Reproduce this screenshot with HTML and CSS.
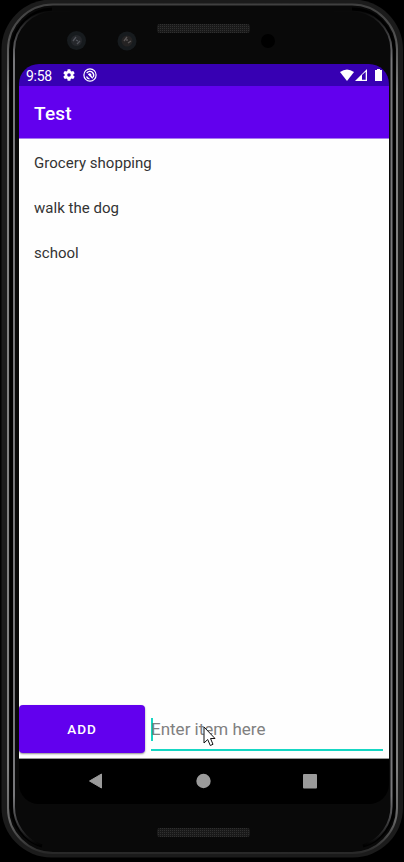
FILE: index.html
```html
<!DOCTYPE html>
<html lang="en">
<head>
<meta charset="utf-8">
<title>Test</title>
<link rel="stylesheet" href="styles.css">
</head>
<body>
<div class="device">
  <svg class="bezel" viewBox="0 0 404 862" aria-hidden="true">
    <defs>
      <linearGradient id="rim" x1="0" y1="0" x2="0" y2="1">
        <stop offset="0" stop-color="#404040"/><stop offset=".03" stop-color="#4c4c4c"/><stop offset=".1" stop-color="#808080"/>
        <stop offset=".9" stop-color="#808080"/><stop offset=".96" stop-color="#666"/><stop offset="1" stop-color="#282828"/>
      </linearGradient>
      <linearGradient id="edge" x1="0" y1="0" x2="0" y2="1">
        <stop offset="0" stop-color="#77777a" stop-opacity="0"/><stop offset=".06" stop-color="#77777a"/>
        <stop offset=".94" stop-color="#77777a"/><stop offset="1" stop-color="#77777a" stop-opacity="0"/>
      </linearGradient>
      <pattern id="mesh" width="2" height="2" patternUnits="userSpaceOnUse">
        <rect width="2" height="2" fill="#191919"/><rect width="1" height="1" fill="#303030"/>
      </pattern>
    </defs>
    <rect x="1.500" y="-.5" width="401.500" height="858" rx="50" fill="#1b1b1b"/>
    <rect x="8" y="4.500" width="389" height="848.500" rx="45" fill="#090909" stroke="url(#rim)" stroke-width="2"/>
    <path d="M52 9A42 42 0 0 0 11.500 52V805A42 42 0 0 0 42 846" fill="none" stroke="#000" stroke-width="3"/>
    <path d="M352 9A42 42 0 0 1 394 52V805A42 42 0 0 1 363 846" fill="none" stroke="#000" stroke-width="3"/>
    <path d="M70 10.500H54A40 40 0 0 0 14 50V805A42 42 0 0 0 42 846" fill="none" stroke="url(#edge)" stroke-width="2"/>
    <path d="M334 10.500H351A40 40 0 0 1 391.500 50V805A42 42 0 0 1 363 846" fill="none" stroke="url(#edge)" stroke-width="2"/>
    <rect x="157" y="24" width="93" height="9" rx="3" fill="url(#mesh)"/>
    <rect x="157" y="828" width="93" height="9" rx="3" fill="url(#mesh)"/>
    <g>
      <circle cx="76.500" cy="40.500" r="9.500" fill="#171b1e"/><circle cx="76.500" cy="40.500" r="5.500" fill="#25272b"/>
      <path d="M73 41l3-4M77 44l3-3M76 40l2 1" stroke="#51545a" stroke-width="1.300"/>
      <circle cx="127" cy="41" r="9.500" fill="#171b1e"/><circle cx="127" cy="41" r="5.500" fill="#252323"/>
      <path d="M124 41l3-4M128 43l3-2M127 39v2" stroke="#5a5656" stroke-width="1.300"/>
      <circle cx="268" cy="41" r="7" fill="#000"/>
    </g>
  </svg>
  <main class="screen">
    <div class="status">
      <span class="time">9:58</span>
      <svg class="gear" viewBox="2 2 20 20"><path fill="#fff" d="M19.140 12.940c.04-.3.060-.61.060-.94s-.02-.64-.07-.94l2.030-1.580c.18-.14.230-.41.120-.61l-1.920-3.320c-.12-.22-.37-.29-.59-.22l-2.390.96c-.5-.38-1.030-.7-1.620-.94L14.400 2.810c-.04-.24-.24-.41-.48-.41h-3.840c-.24 0-.43.170-.47.410L9.250 5.350c-.59.240-1.130.570-1.620.940L5.240 5.330c-.22-.08-.47 0-.59.220L2.740 8.870c-.12.210-.08.470.12.610l2.030 1.580c-.05.300-.09.630-.09.940s.02.640.070.940L2.840 14.520c-.18.140-.23.410-.12.610l1.920 3.320c.12.220.370.290.590.220l2.390-.96c.5.380 1.030.7 1.620.940l.36 2.540c.05.240.240.410.480.410h3.840c.24 0 .44-.17.470-.41l.36-2.540c.59-.24 1.130-.56 1.620-.94l2.390.96c.22.080.470 0 .59-.22l1.920-3.320c.12-.22.070-.47-.12-.61zM12 15a3 3 0 1 1 0-6 3 3 0 0 1 0 6z"/></svg>
      <svg class="ring" viewBox="0 0 14 14"><circle cx="7" cy="7" r="6.100" fill="none" stroke="#fff" stroke-width="1.200"/><path d="M3.700 5.200C5 3 8 2.800 9.500 4.500S10.900 8 10.200 9.200M3.500 8.500Q4.300 10.600 6.500 10.800M5.500 6L9.800 10.300" fill="none" stroke="#fff" stroke-width="1.300"/><path d="M5 6.200Q6.800 4.500 8.300 6.200V8.500Z" fill="#fff"/></svg>
      <svg class="signals" viewBox="0 0 43 13">
        <path fill="#fff" d="M0 3Q7-2 14 3L7 12Z"/>
        <path fill="#fff" d="M15 12L27 0V12Z"/><path fill="#3700b3" d="M22 6L25.700 2.800V10.700H22Z"/>
        <path fill="#fff" d="M35 1h2V0h3v1h2v11h-7Z"/>
      </svg>
    </div>
    <header class="appbar">Test</header>
    <ul class="list">
      <li>Grocery shopping</li>
      <li>walk the dog</li>
      <li>school</li>
    </ul>
    <div class="entry">
      <button class="add">ADD</button>
      <div class="field"><span class="hint">Enter item here</span>
        <svg class="pointer" viewBox="0 0 13 21"><path d="M1 1V17L4.700 13.500L7.300 19.500L10 18.300L7.500 12.500H12Z" fill="#fff" stroke="#111" stroke-width="1"/></svg>
      </div>
    </div>
    <nav class="nav">
      <svg viewBox="0 0 16 16"><path d="M13.500 1V15L1.500 8Z" fill="#9b9b9b" stroke="#9b9b9b" stroke-linejoin="round"/></svg>
      <svg viewBox="0 0 16 16"><circle cx="8.500" cy="8" r="7.200" fill="#9b9b9b"/></svg>
      <svg viewBox="0 0 16 16"><rect x="1" y="1" width="14" height="14.500" rx="1" fill="#9b9b9b"/></svg>
    </nav>
  </main>
</div>
</body>
</html>
```
FILE: styles.css
```css
* { box-sizing: border-box; }
body { margin: 0; background: #000; font-family: Roboto, sans-serif; }
.device { position: relative; width: 404px; height: 862px; padding: 64px 15px 58px 19px; overflow: hidden; }
.bezel { position: absolute; left: 0; top: 0; width: 404px; height: 862px; }
.screen { position: relative; height: 740px; display: flex; flex-direction: column; overflow: hidden; border-radius: 20px; }
.status { height: 22px; flex: none; display: flex; align-items: center; padding: 0 6px 0 7px; background: #3700b3; color: #fff; }
.time { width: 37px; font-size: 14px; line-height: 22px; padding-top: 1px; letter-spacing: -.3px; }
.gear { width: 12px; height: 12px; }
.ring { width: 14px; height: 14px; margin-left: 8px; }
.signals { width: 43px; height: 13px; margin: 1px 0 0 auto; }
.appbar { height: 53px; flex: none; padding-left: 15px; background: #6200ee; color: #fff; font-size: 19px; font-weight: 500; line-height: 56px; letter-spacing: .2px; border-bottom: 1px solid #a77af0; }
.list { flex: 1; margin: 0; padding: 1px 0 0; list-style: none; background: #fefefe; }
.list li { height: 45px; padding-left: 15px; font-size: 15px; line-height: 46px; color: #333; letter-spacing: .03px; }
.entry { height: 54px; flex: none; display: flex; align-items: flex-start; background: #fefefe; border-bottom: 1px solid #999; }
.add { width: 126px; height: 48px; border: 0; padding: 0 0 1px; border-radius: 4px; background: #6200ee; color: #fff; font: 500 13.5px Roboto, sans-serif; letter-spacing: 1px; box-shadow: 0 1px 2px rgba(0, 0, 0, .45); }
.field { position: relative; width: 232px; height: 46px; margin-left: 6px; padding-top: 13px; border-bottom: 2px solid #16d6c3; }
.hint { display: block; height: 23px; border-left: 2px solid #16d6c3; font-size: 17px; line-height: 23px; color: #808080; text-indent: -2px; white-space: nowrap; }
.pointer { position: absolute; left: 52px; top: 21px; width: 13px; height: 21px; }
.nav { height: 45px; flex: none; display: flex; align-items: center; justify-content: space-between; padding: 0 71px 1px 69px; background: #000; }
.nav svg { width: 16px; height: 16px; }
```
